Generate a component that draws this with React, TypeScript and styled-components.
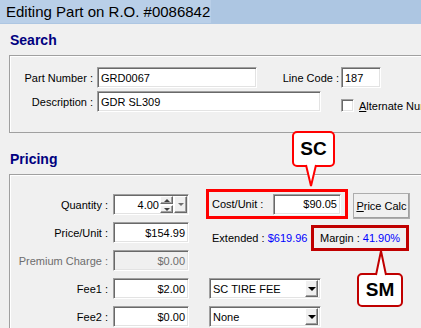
import styled, { createGlobalStyle } from "styled-components";

const GlobalStyle = createGlobalStyle`
  html, body {
    margin: 0;
    padding: 0;
    background: #f0f0f0;
  }
  body {
    font-family: "Liberation Sans", Arial, sans-serif;
    font-size: 11px;
    color: #000;
  }
`;

const Window = styled.div`
  position: relative;
  width: 421px;
  height: 328px;
  overflow: hidden;
  display: flex;
  flex-direction: column;
  background: #f0f0f0;
`;
const TitleBar = styled.div`
  height: 24px;
  flex-shrink: 0;
  display: flex;
  background: #adc6e2;
`;
const TitleText = styled.div`
  width: 211px;
  height: 23px;
  box-sizing: border-box;
  padding-left: 6px;
  background: #b9cfe8;
  font-size: 15px;
  line-height: 24px;
  white-space: nowrap;
`;
const Body = styled.div`
  flex: 1;
  display: flex;
`;
const Strip = styled.div`
  width: 3px;
  background: #adc6e2;
`;
const Content = styled.div`
  flex: 1;
  padding-left: 9px;
`;
const SectionTitle = styled.div<{ $top: number }>`
  margin: ${(p) => p.$top}px 0 7px 1px;
  height: 16px;
  line-height: 16px;
  font-size: 14px;
  font-weight: bold;
  color: #000080;
`;
const GroupBox = styled.div<{ $height: number }>`
  width: 440px;
  height: ${(p) => p.$height}px;
  box-sizing: border-box;
  border: 1px solid #a0a0a0;
  box-shadow: inset 1px 1px 0 #fff;
`;
const SearchBody = styled.div`
  display: flex;
  flex-direction: column;
  gap: 3px;
  padding-top: 11px;
`;
const Row = styled.div`
  display: flex;
  align-items: center;
  height: 21px;
`;
const Label = styled.span<{ $w: number; $pad?: number; $muted?: boolean }>`
  flex-shrink: 0;
  width: ${(p) => p.$w}px;
  box-sizing: border-box;
  padding-right: ${(p) => p.$pad ?? 4}px;
  text-align: right;
  white-space: nowrap;
  color: ${(p) => (p.$muted ? "#6d6d6d" : "#000")};
`;
const Field = styled.div<{ $w: number; $right?: boolean; $disabled?: boolean }>`
  flex-shrink: 0;
  width: ${(p) => p.$w}px;
  height: 21px;
  box-sizing: border-box;
  border: 1px solid;
  border-color: #a0a0a0 #fff #fff #a0a0a0;
  box-shadow: inset 1px 1px 0 #696969, inset -1px -1px 0 #e3e3e3;
  background: ${(p) => (p.$disabled ? "#f0f0f0" : "#fff")};
  color: ${(p) => (p.$disabled ? "#6d6d6d" : "#000")};
  display: flex;
  align-items: center;
  justify-content: ${(p) => (p.$right ? "flex-end" : "flex-start")};
  padding: 0 3px;
  white-space: nowrap;
  overflow: hidden;
`;
const CheckWrap = styled.div`
  align-self: flex-end;
  display: flex;
  align-items: center;
  height: 13px;
  margin-left: 20px;
  white-space: nowrap;
`;
const CheckBox = styled.span`
  width: 13px;
  height: 13px;
  box-sizing: border-box;
  margin-right: 5px;
  border: 1px solid;
  border-color: #a0a0a0 #fff #fff #a0a0a0;
  box-shadow: inset 1px 1px 0 #696969, inset -1px -1px 0 #e3e3e3;
  background: #fff;
`;
const PricingBody = styled.div`
  display: flex;
  padding-top: 14px;
`;
const LeftCol = styled.div`
  margin-top: 5px;
  display: flex;
  flex-direction: column;
  gap: 7px;
`;
const RightCol = styled.div`
  margin-left: 17px;
  display: flex;
  flex-direction: column;
`;
const SpinValue = styled.span`
  flex: 1;
  text-align: right;
  padding-right: 1px;
`;
const SpinStack = styled.div`
  display: flex;
  flex-direction: column;
  gap: 1px;
  width: 13px;
  height: 17px;
`;
const RaisedBtn = styled.div`
  box-sizing: border-box;
  border: 1px solid;
  border-color: #fff #696969 #696969 #fff;
  box-shadow: inset -1px -1px 0 #a0a0a0;
  background: #f0f0f0;
  display: flex;
  align-items: center;
  justify-content: center;
`;
const SpinBtn = styled(RaisedBtn)`
  flex: 1;
`;
const ArrowBtn = styled(RaisedBtn)<{ $w: number; $h: number }>`
  width: ${(p) => p.$w}px;
  height: ${(p) => p.$h}px;
  margin-left: 1px;
`;
const Tri = styled.span<{ $up?: boolean; $size: number; $color: string }>`
  width: 0;
  height: 0;
  border-left: ${(p) => p.$size}px solid transparent;
  border-right: ${(p) => p.$size}px solid transparent;
  ${(p) =>
    p.$up
      ? `border-bottom: ${p.$size}px solid ${p.$color};`
      : `border-top: ${p.$size}px solid ${p.$color};`}
`;
const TopLine = styled.div`
  display: flex;
  align-items: flex-end;
`;
const Highlight = styled.div<{ $color: string; $w: number; $h: number }>`
  box-sizing: border-box;
  width: ${(p) => p.$w}px;
  height: ${(p) => p.$h}px;
  border: 3px solid ${(p) => p.$color};
  display: flex;
  align-items: center;
  padding-left: 3px;
  white-space: nowrap;
`;
const CostLabel = styled.span`
  width: 61px;
  flex-shrink: 0;
`;
const PushButton = styled(RaisedBtn)`
  width: 57px;
  height: 26px;
  margin-left: 5px;
  border-color: #fff #404040 #404040 #fff;
  box-shadow: inset -1px -1px 0 #a0a0a0, 0 0 0 0 transparent;
  outline: 1px solid #adadad;
  outline-offset: -1px;
  white-space: nowrap;
`;
const Mnemonic = styled.span`
  text-decoration: underline;
`;
const InfoLine = styled.div`
  display: flex;
  align-items: center;
  margin-top: 6px;
  height: 26px;
`;
const Extended = styled.div`
  width: 105px;
  padding-left: 6px;
  box-sizing: border-box;
  white-space: nowrap;
`;
const Blue = styled.span`
  color: #0000ff;
`;
const MarginBox = styled(Highlight)`
  padding-left: 6px;
`;
const FeeSelects = styled.div`
  margin: 27px 0 0 3px;
  display: flex;
  flex-direction: column;
  gap: 7px;
`;
const Select = styled(Field)`
  padding: 0 2px 0 3px;
  justify-content: space-between;
`;
const Callout = styled.div<{ $color: string; $x: number; $y: number; $w: number; $h: number }>`
  position: absolute;
  left: ${(p) => p.$x}px;
  top: ${(p) => p.$y}px;
  width: ${(p) => p.$w}px;
  height: ${(p) => p.$h}px;
  box-sizing: border-box;
  border: 2px solid ${(p) => p.$color};
  border-radius: 5px;
  background: #fff;
  display: flex;
  align-items: center;
  justify-content: center;
  font-size: 19px;
  font-weight: bold;
  color: #000;
`;
const Tail = styled.svg<{ $down?: boolean; $left: number }>`
  position: absolute;
  left: ${(p) => p.$left}px;
  ${(p) => (p.$down ? "top: 100%;" : "bottom: 100%;")}
  overflow: visible;
`;

const PriceRow = ({ label, value, muted }: { label: string; value: string; muted?: boolean }) => (
  <Row>
    <Label $w={103} $pad={5} $muted={muted}>
      {label}
    </Label>
    <Field $w={76} $right $disabled={muted}>
      {value}
    </Field>
  </Row>
);

const DropSelect = ({ value }: { value: string }) => (
  <Select $w={112}>
    <span>{value}</span>
    <ArrowBtn $w={13} $h={17}>
      <Tri $size={4} $color="#000" />
    </ArrowBtn>
  </Select>
);

const App = () => {
  return (
    <>
      <GlobalStyle />
      <Window>
        <TitleBar>
          <TitleText>Editing Part on R.O. #0086842</TitleText>
        </TitleBar>
        <Body>
          <Strip />
          <Content>
            <SectionTitle $top={8}>Search</SectionTitle>
            <GroupBox $height={78}>
              <SearchBody>
                <Row>
                  <Label $w={87}>Part Number :</Label>
                  <Field $w={160}>GRD0067</Field>
                  <Label $w={84} $pad={2}>
                    Line Code :
                  </Label>
                  <Field $w={40}>187</Field>
                </Row>
                <Row>
                  <Label $w={87}>Description :</Label>
                  <Field $w={224}>GDR SL309</Field>
                  <CheckWrap>
                    <CheckBox />
                    <span>
                      <Mnemonic>A</Mnemonic>lternate Number
                    </span>
                  </CheckWrap>
                </Row>
              </SearchBody>
            </GroupBox>
            <SectionTitle $top={18}>Pricing</SectionTitle>
            <GroupBox $height={170}>
              <PricingBody>
                <LeftCol>
                  <Row>
                    <Label $w={103} $pad={5}>
                      Quantity :
                    </Label>
                    <Field $w={76} style={{ paddingRight: 1 }}>
                      <SpinValue>4.00</SpinValue>
                      <SpinStack>
                        <SpinBtn>
                          <Tri $up $size={3} $color="#404040" />
                        </SpinBtn>
                        <SpinBtn>
                          <Tri $size={3} $color="#404040" />
                        </SpinBtn>
                      </SpinStack>
                      <ArrowBtn $w={13} $h={17}>
                        <Tri $size={3} $color="#707070" />
                      </ArrowBtn>
                    </Field>
                  </Row>
                  <PriceRow label="Price/Unit :" value="$154.99" />
                  <PriceRow label="Premium Charge :" value="$0.00" muted />
                  <PriceRow label="Fee1 :" value="$2.00" />
                  <PriceRow label="Fee2 :" value="$0.00" />
                </LeftCol>
                <RightCol>
                  <TopLine>
                    <Highlight $color="#ff0000" $w={142} $h={30}>
                      <CostLabel>Cost/Unit :</CostLabel>
                      <Field $w={68} $right>
                        $90.05
                      </Field>
                    </Highlight>
                    <PushButton>
                      <span>
                        <Mnemonic>P</Mnemonic>rice Calc
                      </span>
                    </PushButton>
                  </TopLine>
                  <InfoLine>
                    <Extended>
                      Extended : <Blue>$619.96</Blue>
                    </Extended>
                    <MarginBox $color="#c00000" $w={98} $h={26}>
                      Margin :&nbsp;<Blue>41.90%</Blue>
                    </MarginBox>
                  </InfoLine>
                  <FeeSelects>
                    <DropSelect value="SC TIRE FEE" />
                    <DropSelect value="None" />
                  </FeeSelects>
                </RightCol>
              </PricingBody>
            </GroupBox>
          </Content>
        </Body>
        <Callout $color="#ff0000" $x={292} $y={131} $w={43} $h={36}>
          SC
          <Tail $down $left={11} width={12} height={23}>
            <polygon points="1,-2 6,21 11,-2" fill="#fff" />
            <polyline points="1,0 6,21 11,0" fill="none" stroke="#ff0000" strokeWidth={2} />
          </Tail>
        </Callout>
        <Callout $color="#c00000" $x={357} $y={273} $w={46} $h={34}>
          SM
          <Tail $left={16} width={12} height={26}>
            <polygon points="1,28 6,2 11,28" fill="#fff" />
            <polyline points="1,26 6,2 11,26" fill="none" stroke="#c00000" strokeWidth={2} />
          </Tail>
        </Callout>
      </Window>
    </>
  );
};

export default App;
